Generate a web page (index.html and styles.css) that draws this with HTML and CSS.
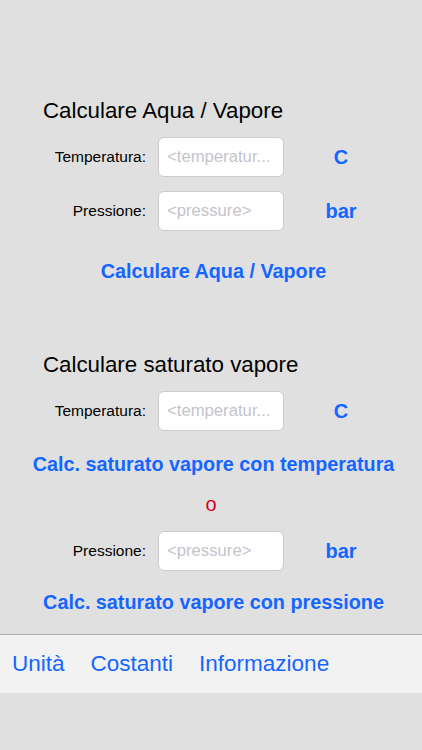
FILE: index.html
```html
<!DOCTYPE html>
<html lang="it">
<head>
    <meta charset="UTF-8">
    <meta name="viewport" content="width=device-width, initial-scale=1.0">
    <title>Aqua / Vapore</title>
    <link rel="stylesheet" href="styles.css">
</head>
<body>
    <div class="screen">
        <h2 class="section-title">Calculare Aqua / Vapore</h2>

        <div class="field-row first">
            <label class="field-label" for="temp1">Temperatura:</label>
            <input class="field-input" id="temp1" type="text" placeholder="<temperatur...">
            <span class="field-unit">C</span>
        </div>
        <div class="field-row second">
            <label class="field-label" for="press1">Pressione:</label>
            <input class="field-input" id="press1" type="text" placeholder="<pressure>">
            <span class="field-unit">bar</span>
        </div>

        <a href="#" class="action-button calc-water">Calculare Aqua / Vapore</a>

        <h2 class="section-title saturated">Calculare saturato vapore</h2>

        <div class="field-row first">
            <label class="field-label" for="temp2">Temperatura:</label>
            <input class="field-input" id="temp2" type="text" placeholder="<temperatur...">
            <span class="field-unit">C</span>
        </div>

        <a href="#" class="action-button calc-temp">Calc. saturato vapore con temperatura</a>

        <div class="or-text">o</div>

        <div class="field-row pressure-row">
            <label class="field-label" for="press2">Pressione:</label>
            <input class="field-input" id="press2" type="text" placeholder="<pressure>">
            <span class="field-unit">bar</span>
        </div>

        <a href="#" class="action-button calc-press">Calc. saturato vapore con pressione</a>

        <!-- bottom toolbar -->
        <div class="toolbar">
            <a href="#" class="toolbar-item">Unità</a>
            <a href="#" class="toolbar-item">Costanti</a>
            <a href="#" class="toolbar-item">Informazione</a>
        </div>
    </div>
</body>
</html>
```

FILE: styles.css
```css
body {
    margin: 0;
    background-color: #e0e0e0;
    font-family: "Liberation Sans", Arial, sans-serif;
}
.screen {
    display: flex;
    flex-direction: column;
    padding-top: 98px;
    min-height: 750px;
    box-sizing: border-box;
}
.section-title {
    margin: 0;
    padding-left: 43px;
    font-size: 22.3px;
    line-height: 26px;
    font-weight: normal;
    color: #000;
}
.section-title.saturated {
    margin-top: 69px;
}
.field-row {
    display: grid;
    grid-template-columns: 146px 126px 90px;
    column-gap: 12px;
    align-items: center;
    height: 40px;
}
.field-row.first {
    margin-top: 13px;
}
.field-row.second {
    margin-top: 14px;
}
.field-row.pressure-row {
    margin-top: 17px;
}
.field-label {
    text-align: right;
    font-size: 15.5px;
    color: #000;
}
.field-input {
    box-sizing: border-box;
    width: 126px;
    height: 40px;
    padding: 0 8px;
    border: 1px solid #cccccc;
    border-radius: 6px;
    background-color: #fff;
    font-family: "Liberation Sans", Arial, sans-serif;
    font-size: 16.7px;
    outline: none;
}
.field-input::placeholder {
    color: #c4c4ca;
}
.field-unit {
    text-align: center;
    font-size: 20px;
    font-weight: bold;
    color: #1566ff;
}
.action-button {
    align-self: center;
    margin-left: 5px;
    font-size: 19.8px;
    line-height: 24px;
    font-weight: bold;
    color: #1566ff;
    text-decoration: none;
}
.calc-water {
    margin-top: 28px;
}
.calc-temp {
    margin-top: 21px;
}
.calc-press {
    margin-top: 19px;
}
.or-text {
    margin-top: 18px;
    text-align: center;
    font-size: 20px;
    line-height: 20px;
    color: #d0021b;
}
.toolbar {
    display: flex;
    align-items: center;
    gap: 26px;
    margin-top: 20px;
    height: 58px;
    padding-left: 12px;
    border-top: 1px solid #b2b2b2;
    background-color: #f2f2f2;
}
.toolbar-item {
    font-size: 22.5px;
    color: #1566ff;
    text-decoration: none;
}
```
